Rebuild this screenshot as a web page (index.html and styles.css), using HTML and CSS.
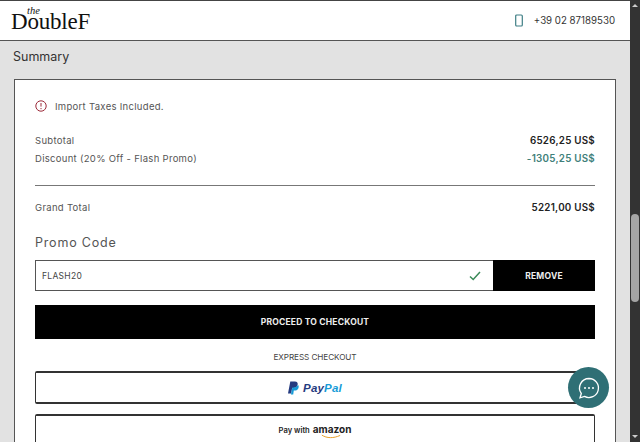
FILE: index.html
```html
<!DOCTYPE html>
<html lang="en">
<head>
  <meta charset="UTF-8">
  <title>Checkout - The Double F</title>
  <link rel="stylesheet" href="styles.css">
</head>
<body>
  <div class="page">
    <header class="site-header">
      <a class="logo"><span class="logo-the">the</span><span class="logo-name">DoubleF</span></a>
      <div class="phone">
        <svg width="8" height="13" viewBox="0 0 8 13" fill="none" stroke="#3f7f85" stroke-width="1.2"><rect x="0.7" y="1" width="6.600" height="11" rx="1"/></svg>
        <span>+39 02 87189530</span>
      </div>
    </header>

    <main class="main">
      <h2 class="summary-title">Summary</h2>
      <section class="card">
        <div class="notice">
          <svg width="12" height="12" viewBox="0 0 12 12" fill="none" stroke="#9c2b3a"><circle cx="6" cy="6" r="5.2"/><path d="M6 3v3.6M6 8v1.2"/></svg>
          <span>Import Taxes Included.</span>
        </div>

        <div class="totals">
          <div class="row"><span>Subtotal</span><strong>6526,25 US$</strong></div>
          <div class="row"><span>Discount (20% Off - Flash Promo)</span><strong class="discount">-1305,25 US$</strong></div>
        </div>
        <div class="row grand"><span>Grand Total</span><strong>5221,00 US$</strong></div>

        <h3 class="promo-title">Promo Code</h3>
        <div class="promo">
          <div class="promo-input">
            <span>FLASH20</span>
            <svg width="12" height="10" viewBox="0 0 12 10" fill="none" stroke="#3a8a58" stroke-width="1.5"><path d="M1 5.5l3.2 3L11 1"/></svg>
          </div>
          <button class="btn-remove">REMOVE</button>
        </div>

        <button class="btn-checkout">PROCEED TO CHECKOUT</button>
        <p class="express">EXPRESS CHECKOUT</p>

        <div class="pay-btn">
          <svg width="11" height="14" viewBox="0 0 12 14"><path fill="#253b80" d="M2.500 0h5C10 0 11 1.500 10.500 3.500 10 6 8 7 6 7H4.500L3.500 13H0z"/><path fill="#179bd7" d="M10.800 3.500c1 1 1 2 .7 3.200C11 8.700 9.500 9.800 7.500 9.800H6.300L5.700 14H3.200l.5-2.500 1-5h1.500c2.300 0 4-1 4.600-3z"/></svg>
          <span class="paypal"><em class="pay">Pay</em><em class="pal">Pal</em></span>
        </div>
        <div class="pay-btn amazon-btn">
          <span class="pay-with">Pay with</span>
          <span class="amazon">amazon<svg width="20" height="5" viewBox="0 0 24 5" fill="none" stroke="#e8a02c" stroke-width="1.200"><path d="M1 .8c6 4 14 4 22 .4"/></svg></span>
        </div>
      </section>
    </main>
  </div>

  <div class="chat">
    <svg width="24" height="24" viewBox="0 0 24 24" fill="none" stroke="#fff" stroke-width="1.300"><path d="M12 2.500a9.500 9.500 0 1 1-4.500 17.900L3 21.800l1.300-4.300A9.500 9.500 0 0 1 12 2.500z"/><path d="M8 12h.01M12 12h.01M16 12h.01" stroke-width="2" stroke-linecap="round"/></svg>
  </div>

  <div class="scrollbar">
    <div class="scroll-up"></div>
    <div class="scroll-thumb"></div>
    <div class="scroll-down"></div>
  </div>
</body>
</html>
```

FILE: styles.css
```css
html, body {
  margin: 0;
  height: 442px;
  overflow: hidden;
}
body {
  font-family: Inter, 'Liberation Sans', sans-serif;
  color: #333;
  background: #e2e2e2;
}
.page {
  width: 630px;
  height: 442px;
  overflow: hidden;
}
.site-header {
  height: 39px;
  background: #fff;
  border-top: 1px solid #444;
  border-bottom: 1px solid #555;
  display: flex;
  justify-content: space-between;
  align-items: center;
  padding: 0 15px 0 11px;
}
.logo {
  position: relative;
  color: #111;
  font-family: 'Liberation Serif', serif;
  line-height: 1;
  margin-top: 2px;
}
.logo-name {
  font-size: 23px;
  letter-spacing: -0.2px;
}
.logo-the {
  position: absolute;
  left: 16px;
  top: -4px;
  font-size: 10.500px;
  line-height: 10px;
  font-style: italic;
}
.phone {
  display: flex;
  align-items: center;
  gap: 11px;
  font-size: 9.700px;
}
.main {
  padding: 0 14px;
}
.summary-title {
  margin: 0 0 0 -1px;
  height: 38px;
  line-height: 32px;
  font-size: 12.500px;
  font-weight: 400;
}
.card {
  background: #fff;
  border: 1px solid #555;
  padding: 19px 20px 0;
  height: 400px;
}
.notice {
  display: flex;
  align-items: center;
  gap: 8px;
  font-size: 9.500px;
  letter-spacing: 0.3px;
  color: #555;
  height: 14px;
}
.totals {
  margin-top: 18px;
  padding-bottom: 18px;
  border-bottom: 1px solid #777;
}
.row {
  display: flex;
  justify-content: space-between;
  align-items: center;
  height: 18px;
  font-size: 9.500px;
  letter-spacing: 0.3px;
  color: #555;
}
.row strong {
  color: #222;
  font-weight: 600;
  font-size: 9.800px;
  letter-spacing: 0.25px;
}
.row strong.discount {
  color: #3f7f7a;
}
.grand {
  margin-top: 12px;
}
.promo-title {
  margin: 18px 0 0;
  font-size: 12.500px;
  font-weight: 400;
  letter-spacing: 0.8px;
  color: #555;
  height: 18px;
  line-height: 18px;
}
.promo {
  display: flex;
  height: 31px;
  margin-top: 8px;
}
.promo-input {
  flex: 1;
  border: 1px solid #555;
  border-right: 0;
  display: flex;
  justify-content: space-between;
  align-items: center;
  padding: 0 12px 0 6px;
  font-size: 8.500px;
  letter-spacing: 0.3px;
  color: #444;
}
.btn-remove,
.btn-checkout {
  background: #000;
  color: #eee;
  border: 0;
  font-family: inherit;
  font-size: 8.500px;
  font-weight: 700;
  letter-spacing: 0.2px;
  padding: 0;
}
.btn-remove {
  width: 102px;
}
.btn-checkout {
  display: block;
  width: 100%;
  height: 34px;
  margin-top: 14px;
}
.express {
  margin: 13px 0 0;
  text-align: center;
  font-size: 8.200px;
  letter-spacing: -0.1px;
  line-height: 11px;
  color: #444;
}
.pay-btn {
  height: 29px;
  margin-top: 8px;
  border: 1px solid #333;
  border-width: 2px 1px;
  border-radius: 2px;
  display: flex;
  justify-content: center;
  align-items: center;
  gap: 4px;
}
.paypal {
  font-family: 'Liberation Sans', sans-serif;
  font-size: 11.500px;
  font-weight: 700;
  font-style: italic;
  letter-spacing: 0.2px;
}
.paypal em {
  font-style: inherit;
}
.pay { color: #253b80; }
.pal { color: #179bd7; }
.amazon-btn {
  margin-top: 10px;
  height: 40px;
  align-items: flex-start;
  padding-top: 6px;
  gap: 3px;
}
.pay-with {
  font-size: 7.600px;
  font-weight: 600;
  color: #222;
  line-height: 17px;
}
.amazon {
  position: relative;
  font-size: 10px;
  font-weight: 700;
  color: #222;
  line-height: 15px;
}
.amazon svg {
  position: absolute;
  left: 8px;
  top: 12px;
}
.chat {
  position: absolute;
  left: 568px;
  top: 367px;
  width: 41px;
  height: 41px;
  border-radius: 50%;
  background: #2f6f75;
  display: flex;
  align-items: center;
  justify-content: center;
}
.scrollbar {
  position: absolute;
  top: 0;
  right: 0;
  width: 10px;
  height: 442px;
  background: #333;
}
.scroll-thumb {
  position: absolute;
  left: 1px;
  top: 214px;
  width: 8px;
  height: 88px;
  border-radius: 4px;
  background: #a5a5a5;
}
.scroll-up,
.scroll-down {
  position: absolute;
  left: 2px;
  width: 0;
  height: 0;
  border-left: 3px solid transparent;
  border-right: 3px solid transparent;
}
.scroll-up {
  top: 4px;
  border-bottom: 3px solid #ccc;
}
.scroll-down {
  bottom: 4px;
  border-top: 3px solid #ccc;
}
```
